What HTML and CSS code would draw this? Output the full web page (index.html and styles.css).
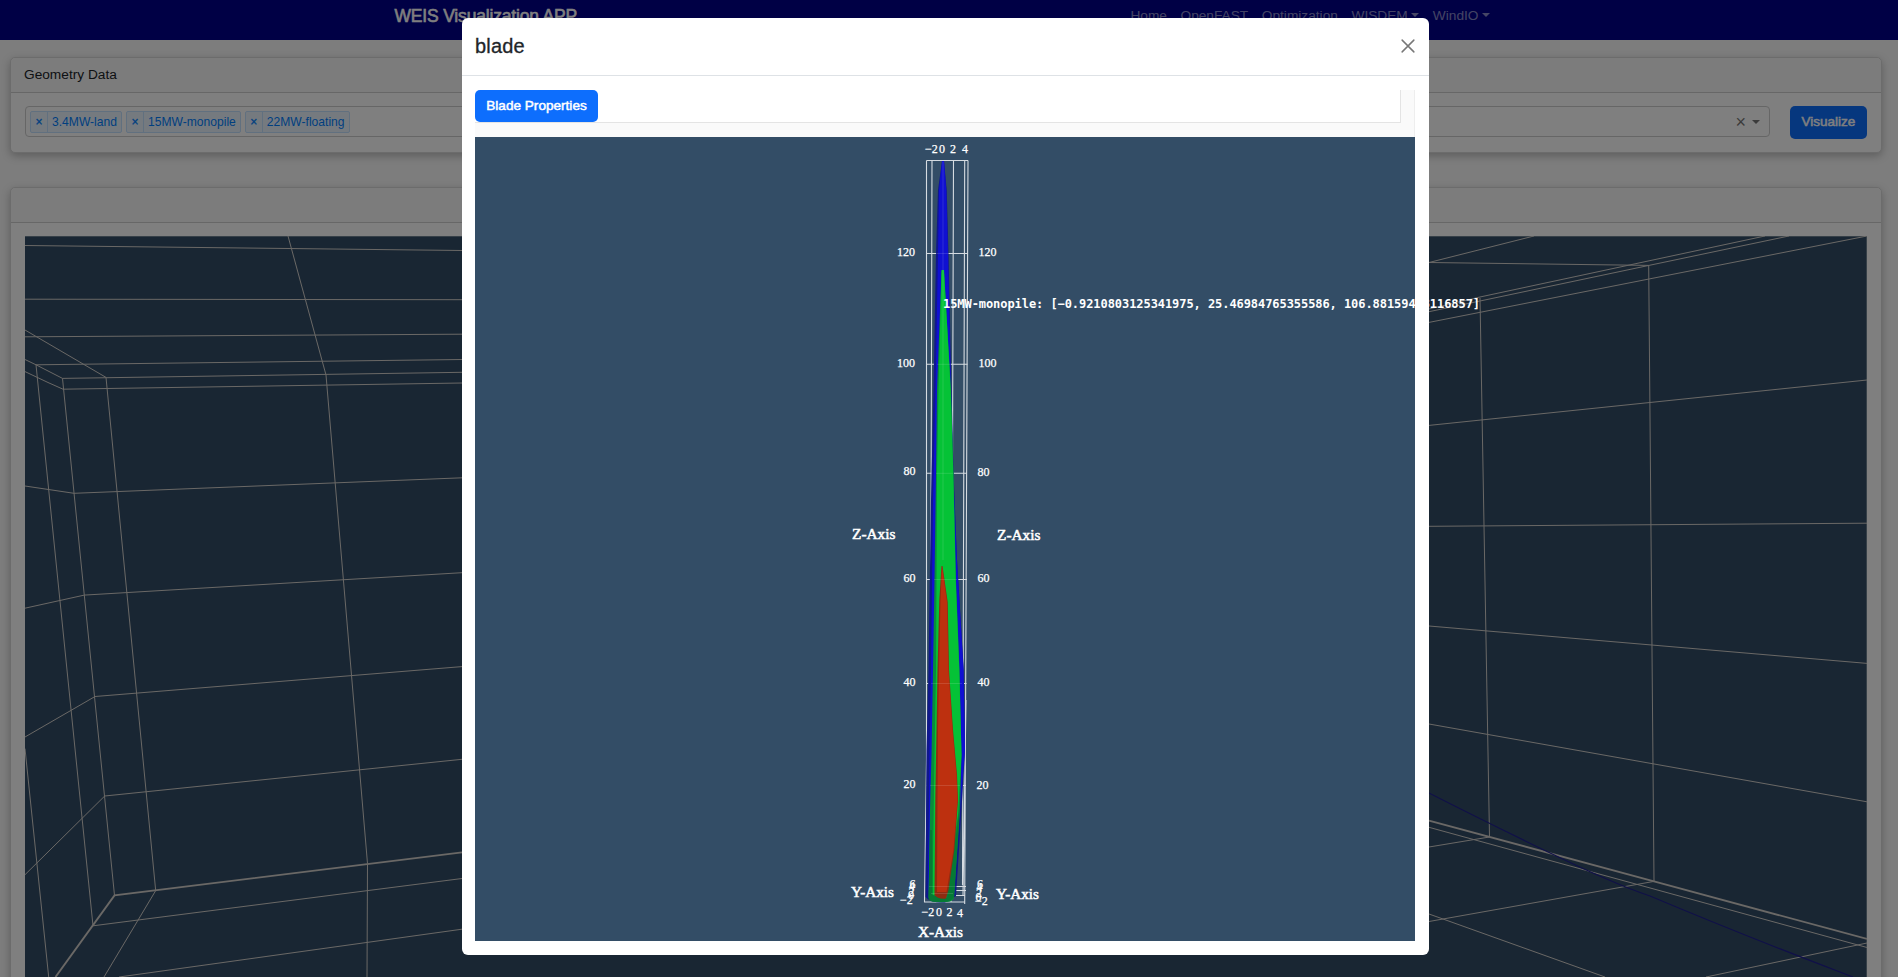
FILE: index.html
```html
<!DOCTYPE html>
<html lang="en">
<head>
<meta charset="utf-8">
<title>WEIS Visualization APP</title>
<link rel="stylesheet" href="styles.css">
</head>
<body>
<nav class="navbar">
  <span class="brand">WEIS Visualization APP</span>
  <div class="links">
    <a>Home</a><a>OpenFAST</a><a>Optimization</a><a class="drop">WISDEM</a><a class="drop">WindIO</a>
  </div>
</nav>
<main class="page">
  <section class="card">
    <div class="card-header">Geometry Data</div>
    <div class="card-body controls">
      <div class="select">
        <span class="tag"><i>×</i><b>3.4MW-land</b></span>
        <span class="tag"><i>×</i><b>15MW-monopile</b></span>
        <span class="tag"><i>×</i><b>22MW-floating</b></span>
        <span class="clear">×</span><span class="arrow"></span>
      </div>
      <button class="btn visualize">Visualize</button>
    </div>
  </section>
  <section class="card view-card">
    <div class="card-header"></div>
    <div class="card-body">
      <svg class="scene" viewBox="25 236 1842 741" width="1842" height="741">
        <g class="grid">
          <path class="edge" d="M25 236.5H1866.500V977"/>
          <path d="M25 245.5L462 250.5M25 299.2L462 299.7M25 336.8L462 334.2M25 330L106 377.4M25 359.5L36 364.8L62.5 378.4M25 371.6L48 382.500L63 389.200M36 364.8L462 359.5M62.500 378.400L462 372.300M63 389.200L462 383"/>
          <path d="M36 364.800L93 925.800M62.500 378.400L114.500 895.400M106 377.400L155.700 890.600M288 236L326 375L367.500 863.600L367 977"/>
          <path d="M25 486L74 493.300L462 477.800M25 608.200L84.300 595.100L462 572.700M25 737L95 696.500L462 666.600M25 874.700L104.700 796L462 759.300"/>
          <path d="M93 925.800L462 878.500M119 977L462 929.200M155.700 890.600L104 977M25 748.600L48.700 977"/>
          <path class="thick" d="M55.500 977L114.500 895.400L462 852.400"/>
          <path d="M1429 262.500L1534 236M1429 262.500L1649 265.400M1429 311.700L1480 301L1649 265.400L1789 236M1429 309L1480 297L1765 236M1429 322.400L1867 236M1480 298L1489.500 837M1648.700 265.400L1654 881.400"/>
          <path d="M1429 425.400L1867 380M1429 526.300L1867 523.200M1429 626L1867 663.400M1429 724L1867 801.800M1429 827.300L1867 947.500M1429 847L1489.500 837M1429 921.500L1654 881.400M1429 914L1605 977M1706 977L1867 943"/>
          <path class="thick" d="M1429 820.600L1654 881.400L1867 938.900"/>
        </g>
        <path class="cable" d="M1429 793Q1480 819 1547 851.500T1650 896Q1740 934 1853 977"/>
      </svg>
    </div>
  </section>
</main>
<div class="backdrop"></div>
<div class="modal">
  <header class="modal-header">
    <h5>blade</h5>
    <svg class="close" viewBox="0 0 16 16" width="14" height="14"><path d="M1.300 1.300L14.700 14.700M14.700 1.300L1.300 14.700"/></svg>
  </header>
  <div class="modal-body">
    <div class="tabs"><div class="tab-row"><button class="btn">Blade Properties</button></div></div>
    <svg class="blade" viewBox="475 137 940 804" width="940" height="804">
      <g class="axes">
        <path d="M926.500 160.500H968M926.500 160.500L926.500 760L924.500 902H964.500M932 160.500L930 900M953.500 160.500L951 902M964.700 160.500L962.500 885M968 160.500L964.700 904M966 700L963 895"/>
        <path d="M926.500 253.500H967.500M926.500 364.300H967.500M926.500 473.300H967M926.500 579.500H967M926.500 683.500H966.500M926.500 785.500H966M927 886.500H966M926 890.500H966M926 895.500H965"/>
      </g>
      <path class="b-edge" d="M942 161H944L946.700 190L948.500 253L951.500 390L953.500 470L957 560L963.800 670L965 750L961.500 810L956 896L945 902.500Q930 903 925.500 897L925.800 850L926.500 750L928.500 670L931 500L933.500 390L936 253L938 190Z"/>
      <path class="b-main" d="M942 161H944L946.300 190L948 253L951 390L953 470L957 560L963.500 670L965 750L960 810L950 900L928 890L929.500 750L931 670L933 500L935.500 390L938 253L939 190Z"/>
      <path class="g-edge" d="M941.500 271L937 390L936 473L934.500 580L933 670L931.500 755L930 810L928.500 898Q934 903 945 902Q953 902 954 898L960 810L961.500 755L959.500 670L956 580L953.500 473L951 390L944 271Z"/>
      <path class="g-main" d="M941.500 270L938.500 390L937 473L936.500 580L936 670L934.500 755L932.500 895L945 898L958 815L961.500 755L959.300 670L955.700 580L953.300 473L950.700 390L944 270Z"/>
      <path class="g-low" d="M954 850L960 805L954 897Q951 902 943 902H936Q929 902 928.500 898L930 830L932 830L932.500 895L947 898Z"/>
      <path class="r-edge" d="M941.500 566L939.300 600L937.500 670L936.500 730L935.300 800L934.500 895Q938 899.500 946 898.500L948.500 890L954.300 850L958 800L957 775L953 730L949 670L947.700 602L942.500 566Z"/>
      <path class="r-main" d="M942 566L940.500 600L939 670L938 730L937.500 800L937 892L946.500 892L953.500 850L957.500 800L956.500 775L952.500 730L948.500 670L947 602Z"/>
      <path class="ghost" d="M943 162V560M936 253.500H948M937 364.300H951M936 473.300H953M934 579.500H957M931 683.500H962M930 785.500H960M929 886.500H957M931 893.500H953"/>
      <g class="tick">
        <text x="925" y="153">−2</text><text x="939" y="153">0</text><text x="950" y="153">2</text><text x="962" y="153">4</text>
        <text x="921.500" y="916">−2</text><text x="936" y="916">0</text><text x="946.500" y="916">2</text><text x="957" y="916.500">4</text>
        <text x="897" y="256">120</text><text x="897" y="366.500">100</text><text x="903.500" y="475">80</text><text x="903.500" y="581.500">60</text><text x="903.500" y="686">40</text><text x="903.500" y="788">20</text>
        <text x="978.500" y="256">120</text><text x="978.500" y="367">100</text><text x="977.500" y="476">80</text><text x="977.500" y="582">60</text><text x="977.500" y="686">40</text><text x="976.500" y="788.500">20</text>
        <text x="909.500" y="888">6</text><text x="909" y="890">4</text><text x="908.500" y="896">2</text><text x="908" y="899">0</text><text x="900" y="903.500">−2</text>
        <text x="977" y="888">6</text><text x="976.500" y="891">4</text><text x="976" y="897">2</text><text x="975.500" y="901">0</text><text x="975" y="905">−2</text>
      </g>
      <g class="axis-title">
        <text x="852" y="538.500" textLength="43.500" lengthAdjust="spacingAndGlyphs">Z-Axis</text><text x="997" y="539.500" textLength="43.500" lengthAdjust="spacingAndGlyphs">Z-Axis</text>
        <text x="851" y="896.500" textLength="43" lengthAdjust="spacingAndGlyphs">Y-Axis</text><text x="996" y="898.500" textLength="43" lengthAdjust="spacingAndGlyphs">Y-Axis</text>
        <text x="918" y="936.500" textLength="45" lengthAdjust="spacingAndGlyphs">X-Axis</text>
      </g>
    </svg>
  </div>
</div>
<div class="tooltip">15MW-monopile: [−0.9210803125341975, 25.46984765355586, 106.88159448116857]</div>
</body>
</html>
```
FILE: styles.css
```css
* { box-sizing: border-box; }
html { height: 977px; overflow: hidden; }
body {
  margin: 0;
  height: 977px;
  overflow: hidden;
  background: #fafafa;
  color: #212529;
  font: 14px/21px "Liberation Sans", Arial, sans-serif;
}
.navbar {
  height: 40px;
  background: #00008b;
  display: flex;
  align-items: flex-start;
  padding: 6px 408px 0 394.500px;
  justify-content: space-between;
}
.brand {
  color: #fff;
  font-size: 17.5px;
  line-height: 20px;
  -webkit-text-stroke: .55px #fff;
  letter-spacing: -.18px;
}
.links { display: flex; gap: 13.600px; font-size: 13.700px; line-height: 20px; color: rgba(255,255,255,.55); }
.drop::after {
  content: "";
  display: inline-block;
  margin-left: 3.500px;
  vertical-align: 3.500px;
  border: 4px solid transparent;
  border-top-color: currentColor;
  border-bottom: 0;
}
.page { padding: 17px 16px 0 10px; }
.card {
  border: 1px solid #d8d8d8;
  border-radius: 5px;
  background: #fff;
  box-shadow: 0 3px 8px rgba(0,0,0,.25);
}
.card-header { height: 35px; padding: 6px 13px; font-size: 13.700px; background: #f8f8f8; border-bottom: 1px solid #cfcfcf; border-radius: 5px 5px 0 0; }
.controls { display: flex; align-items: flex-start; gap: 20px; height: 59px; padding: 13px 14px 0 14px; }
.select {
  flex: 1;
  height: 31px;
  border: 1px solid #ccc;
  border-radius: 4px;
  display: flex;
  align-items: center;
  padding: 1px 9px 0 4px;
  gap: 4px;
}
.tag {
  display: flex;
  height: 22px;
  font-size: 12.100px;
  line-height: 20px;
  color: #007eff;
  background: #ebf5ff;
  border: 1px solid #c2e0ff;
  border-radius: 2px;
}
.tag i { font-style: normal; width: 17px; text-align: center; border-right: 1px solid #c2e0ff; -webkit-text-stroke: .3px #007eff; }
.tag b { font-weight: 400; padding: 0 4px; }
.clear { margin-left: auto; font-size: 18px; color: #777; }
.arrow { margin-left: 2px; border: 4px solid transparent; border-top-color: #777; border-bottom: 0; }
.btn {
  border: 0;
  border-radius: 5px;
  background: #0d6efd;
  color: #fff;
  font: 13.600px/21px "Liberation Sans", Arial, sans-serif;
  -webkit-text-stroke: .5px #fff;
  height: 32px;
  width: 123px;
  padding: 0;
}
.btn.visualize { width: 77px; height: 33px; padding-bottom: 2px; font-size: 13.500px; }
.view-card { margin-top: 34px; height: 820px; }
.view-card .card-body { padding: 13px 14px 0 14px; }
.scene { display: block; background: #334d66; }
.grid path { fill: none; stroke: #d4d0cc; stroke-width: 1; }
.grid .thick { stroke-width: 1.900; }
.grid .edge { stroke: #6d8090; }
.cable { fill: none; stroke: #202090; stroke-width: 1.200; }
.backdrop { position: absolute; inset: 0; background: rgba(0,0,0,.5); }
.modal {
  position: absolute;
  left: 462px;
  top: 18px;
  width: 967px;
  height: 937px;
  background: #fff;
  border-radius: 6px;
}
.modal-header {
  height: 58px;
  border-bottom: 1px solid #dee2e6;
  padding: 0 14px 1px 13px;
  display: flex;
  justify-content: space-between;
  align-items: center;
}
.modal-header h5 { margin: 0; font-size: 20px; line-height: 24px; font-weight: 400; letter-spacing: .2px; -webkit-text-stroke: .3px #212529; }
.close path { stroke: #777; stroke-width: 1.700; stroke-linecap: round; }
.modal-body { padding: 14px 14px 14px 13px; }
.tabs { height: 47px; background: #fafafa; padding-right: 13px; border-right: 1px solid #eee; }
.tab-row { height: 33px; background: #fff; border-right: 1px solid #e4e4e4; border-bottom: 1px solid #e4e4e4; }
.tab-row .btn { display: block; padding-bottom: 1px; }
.blade { display: block; background: #334d66; }
.axes path { fill: none; stroke: #d5dbe1; stroke-width: 1.100; }
.b-edge { fill: #10188c; }
.b-main { fill: #1010d2; }
.g-edge { fill: #078c3c; }
.g-main { fill: #05c236; }
.g-low { fill: #067a35; }
.r-edge { fill: #8f2c12; }
.r-main { fill: #bd300f; }
.ghost { fill: none; stroke: #fff; stroke-width: 1; opacity: .13; }
.tick text { font: 12px "Liberation Serif", serif; fill: #fff; stroke: #fff; stroke-width: .25px; }
.axis-title text { font: 15px "Liberation Serif", serif; fill: #fff; stroke: #fff; stroke-width: .5px; }
.tooltip {
  position: absolute;
  left: 943px;
  top: 294px;
  white-space: nowrap;
  color: #fff;
  font: bold 12px/20px "DejaVu Sans Mono", monospace;
  letter-spacing: -.065px;
}
```
